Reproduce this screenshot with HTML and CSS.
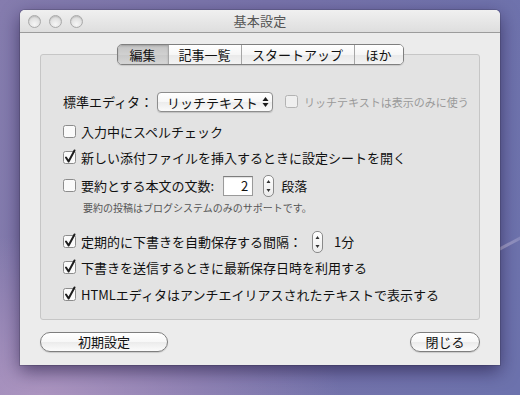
FILE: index.html
```html
<!DOCTYPE html>
<html lang="ja">
<head>
<meta charset="utf-8">
<title>基本設定</title>
<link rel="stylesheet" href="styles.css">
</head>
<body>
<div class="desktop">
  <div class="streak"></div>
  <div class="window">
    <div class="titlebar">
      <div class="lights">
        <span class="light"></span><span class="light"></span><span class="light"></span>
      </div>
      <div class="title">基本設定</div>
    </div>
    <div class="content">
      <div class="tabs">
        <span class="tab tab-1 selected">編集</span>
        <span class="tab tab-2">記事一覧</span>
        <span class="tab tab-3">スタートアップ</span>
        <span class="tab tab-4">ほか</span>
      </div>
      <div class="group">
        <div class="row row-editor">
          <span class="label">標準エディタ：</span>
          <span class="popup">
            <span class="popup-text">リッチテキスト</span>
            <svg class="popup-arrows" width="7" height="12" viewBox="0 0 7 12"><path d="M3.5 1 L6.5 5 L0.5 5 Z M3.5 11 L6.5 7 L0.5 7 Z" fill="#1a1a1a"/></svg>
          </span>
          <span class="cb disabled"><svg width="14" height="14" viewBox="0 0 14 14"><rect x="0.5" y="0.5" width="12" height="12" rx="2" class="cb-box"/></svg></span>
          <span class="label-dim">リッチテキストは表示のみに使う</span>
        </div>
        <div class="row row-2">
          <span class="cb"><svg width="14" height="14" viewBox="0 0 14 14"><rect x="0.5" y="0.5" width="12" height="12" rx="2" class="cb-box"/></svg></span>
          <span class="label">入力中にスペルチェック</span>
        </div>
        <div class="row row-3">
          <span class="cb"><svg width="14" height="14" viewBox="0 0 14 14"><rect x="0.5" y="0.5" width="12" height="12" rx="2" class="cb-box"/><path d="M3 6.5 L5.6 10.5 L11.5 -0.5" class="cb-check"/></svg></span>
          <span class="label">新しい添付ファイルを挿入するときに設定シートを開く</span>
        </div>
        <div class="row row-4">
          <span class="cb"><svg width="14" height="14" viewBox="0 0 14 14"><rect x="0.5" y="0.5" width="12" height="12" rx="2" class="cb-box"/></svg></span>
          <span class="label">要約とする本文の文数:</span>
          <span class="field">2</span>
          <span class="stepper"><svg width="11" height="22" viewBox="0 0 11 22"><path d="M5.5 5 L7.5 8 L3.5 8 Z M5.5 17 L7.5 14 L3.5 14 Z" fill="#333"/></svg></span>
          <span class="label">段落</span>
        </div>
        <div class="note">要約の投稿はブログシステムのみのサポートです。</div>
        <div class="row row-5">
          <span class="cb"><svg width="14" height="14" viewBox="0 0 14 14"><rect x="0.5" y="0.5" width="12" height="12" rx="2" class="cb-box"/><path d="M3 6.5 L5.6 10.5 L11.5 -0.5" class="cb-check"/></svg></span>
          <span class="label">定期的に下書きを自動保存する間隔：</span>
          <span class="stepper stepper-b"><svg width="11" height="22" viewBox="0 0 11 22"><path d="M5.5 5 L7.5 8 L3.5 8 Z M5.5 17 L7.5 14 L3.5 14 Z" fill="#333"/></svg></span>
          <span class="label">1分</span>
        </div>
        <div class="row row-6">
          <span class="cb"><svg width="14" height="14" viewBox="0 0 14 14"><rect x="0.5" y="0.5" width="12" height="12" rx="2" class="cb-box"/><path d="M3 6.5 L5.6 10.5 L11.5 -0.5" class="cb-check"/></svg></span>
          <span class="label">下書きを送信するときに最新保存日時を利用する</span>
        </div>
        <div class="row row-7">
          <span class="cb"><svg width="14" height="14" viewBox="0 0 14 14"><rect x="0.5" y="0.5" width="12" height="12" rx="2" class="cb-box"/><path d="M3 6.5 L5.6 10.5 L11.5 -0.5" class="cb-check"/></svg></span>
          <span class="label">HTMLエディタはアンチエイリアスされたテキストで表示する</span>
        </div>
      </div>
      <div class="footer">
        <button class="btn btn-reset">初期設定</button>
        <button class="btn btn-close">閉じる</button>
      </div>
    </div>
  </div>
</div>
</body>
</html>
```

FILE: styles.css
```css
html, body {
  margin: 0;
  padding: 0;
}
body {
  width: 520px;
  height: 395px;
  overflow: hidden;
  font-family: "Noto Sans CJK JP", "Noto Sans", sans-serif;
  font-size: 13px;
  color: #111;
  background:
    radial-gradient(ellipse 300px 160px at 40px 395px, rgba(190,160,200,0.7), rgba(190,160,200,0) 100%),
    linear-gradient(100deg, #857cae 0%, #7873aa 45%, #6c72ad 100%);
}
.desktop {
  position: relative;
  padding: 10px 20px;
}
.streak {
  position: absolute;
  right: -20px;
  top: 250px;
  width: 90px;
  height: 3px;
  background: linear-gradient(90deg, rgba(255,255,255,0), rgba(230,220,240,0.55), rgba(255,255,255,0));
  transform: rotate(-28deg);
}
.window {
  position: relative;
  width: 480px;
  height: 355px;
  box-sizing: border-box;
  background: #ececec;
  border-radius: 5px 5px 0 0;
  box-shadow: 0 6px 18px rgba(20, 10, 50, 0.55), 0 0 0 1px rgba(60,60,80,0.25);
  display: flex;
  flex-direction: column;
}
.titlebar {
  position: relative;
  height: 22px;
  border-bottom: 1px solid #9c9c9c;
  border-radius: 5px 5px 0 0;
  background: linear-gradient(#f0f0f0, #dedede);
  display: flex;
  align-items: center;
  justify-content: center;
  flex-shrink: 0;
}
.lights {
  position: absolute;
  left: 8px;
  top: 5px;
  display: flex;
  gap: 8px;
}
.light {
  width: 11px;
  height: 11px;
  border-radius: 50%;
  border: 1px solid #a9a9a9;
  background: radial-gradient(circle at 50% 75%, #f6f6f6 0%, #e2e2e2 55%, #cdcdcd 100%);
  box-shadow: inset 0 1px 1px rgba(0,0,0,0.12);
}
.title {
  font-size: 13px;
  color: #555;
  line-height: 22px;
  letter-spacing: 0.2px;
}
.content {
  padding: 11px 20px 13px;
  display: flex;
  flex-direction: column;
}
.tabs {
  position: relative;
  z-index: 1;
  align-self: center;
  display: flex;
  height: 21px;
  box-sizing: border-box;
  border: 1px solid #7f7f7f;
  border-radius: 5px;
  overflow: hidden;
  box-shadow: 0 1px 1px rgba(0,0,0,0.12);
}
.tab {
  display: flex;
  align-items: center;
  justify-content: center;
  height: 19px;
  font-size: 13px;
  color: #111;
  background: linear-gradient(#ffffff 0%, #f6f6f6 50%, #e9e9e9 51%, #f3f3f3 100%);
  border-left: 1px solid #a6a6a6;
  box-sizing: border-box;
}
.tab-1 { width: 50px; border-left: none; }
.tab-2 { width: 73px; }
.tab-3 { width: 113px; }
.tab-4 { width: 49px; }
.tab.selected {
  background: linear-gradient(#c4c4c4 0%, #d0d0d0 50%, #c8c8c8 51%, #d6d6d6 100%);
  box-shadow: inset 0 1px 2px rgba(0,0,0,0.18);
}
.group {
  margin-top: -11px;
  height: 266px;
  box-sizing: border-box;
  border: 1px solid #c6c6c6;
  border-radius: 3px;
  background: #e3e3e3;
  padding: 37px 0 0 22px;
  display: flex;
  flex-direction: column;
}
.row {
  display: flex;
  align-items: center;
  height: 20px;
  white-space: nowrap;
}
.label {
  font-size: 13px;
  line-height: 20px;
}
.row-2 { margin-top: 10px; }
.row-3 { margin-top: 6px; }
.row-4 { margin-top: 8px; }
.row-5 { margin-top: 17px; }
.row-6 { margin-top: 6px; }
.row-7 { margin-top: 7px; }
.cb {
  display: flex;
  width: 14px;
  height: 14px;
  margin-right: 4px;
}
.cb svg { overflow: visible; }
.cb-box {
  fill: #fafafa;
  stroke: #8c8c8c;
  stroke-width: 1;
}
.cb-check {
  fill: none;
  stroke: #1c1c1c;
  stroke-width: 2;
  stroke-linecap: round;
  stroke-linejoin: round;
}
.cb.disabled { margin-left: 12px; margin-right: 5px; opacity: 0.55; }
.label-dim {
  font-size: 11px;
  color: #9a9a9a;
}
.popup {
  margin-left: 4px;
  width: 116px;
  height: 20px;
  box-sizing: border-box;
  border: 1px solid #8d8d8d;
  border-radius: 4px;
  background: linear-gradient(#ffffff 0%, #f7f7f7 50%, #ececec 51%, #fafafa 100%);
  box-shadow: 0 1px 1px rgba(0,0,0,0.15);
  display: flex;
  align-items: center;
  padding: 0 3px 0 9px;
  justify-content: space-between;
}
.popup-text { font-size: 13px; }
.field {
  margin-left: 9px;
  width: 30px;
  height: 20px;
  box-sizing: border-box;
  border: 1px solid #9a9a9a;
  border-top-color: #7d7d7d;
  background: #fff;
  box-shadow: inset 0 1px 1px rgba(0,0,0,0.12);
  text-align: right;
  padding-right: 4px;
  font-size: 13px;
  line-height: 18px;
}
.stepper {
  margin: 0 7px 0 10px;
  width: 11px;
  height: 22px;
  box-sizing: border-box;
  border: 1px solid #8a8a8a;
  border-radius: 5px;
  background: linear-gradient(#ffffff, #ebebeb);
  display: flex;
  align-items: center;
  justify-content: center;
  overflow: hidden;
}
.stepper svg { flex-shrink: 0; }
.stepper-b { margin: 0 11px 0 10px; }
.note {
  margin-top: 5px;
  padding-left: 20px;
  font-size: 10px;
  line-height: 14px;
  color: #555;
}
.footer {
  margin-top: 12px;
  display: flex;
  justify-content: space-between;
}
.btn {
  height: 20px;
  box-sizing: border-box;
  border: 1px solid #7e7e7e;
  border-radius: 10px;
  background: linear-gradient(#ffffff 0%, #f7f7f7 50%, #ebebeb 51%, #fbfbfb 100%);
  box-shadow: 0 1px 1px rgba(0,0,0,0.15);
  font-family: "Noto Sans CJK JP", "Noto Sans", sans-serif;
  font-size: 13px;
  color: #111;
  padding: 0;
  line-height: 18px;
}
.btn-reset { width: 128px; }
.btn-close { width: 70px; }
```
